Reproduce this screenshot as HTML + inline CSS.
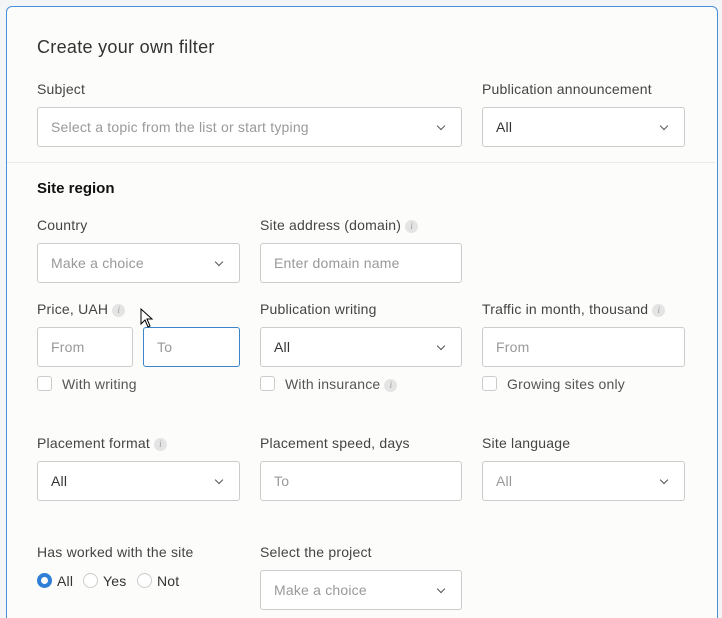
<!DOCTYPE html><html><head><style>
*{box-sizing:border-box;margin:0;padding:0}
html,body{width:722px;height:618px;overflow:hidden}
body{background:#f3f5f7;font-family:"Liberation Sans",sans-serif;position:relative}
.panel{position:absolute;left:6px;top:6px;width:712px;height:640px;background:#fcfcfa;border:1px solid #4a90d9;border-radius:6px}
.a{position:absolute}
.t{font-size:18px;color:#333;letter-spacing:0.3px}
.l{font-size:14px;color:#444;letter-spacing:0.2px}
.in{position:absolute;height:40px;border:1px solid #ccc;border-radius:3px;background:#fff;font-size:14px;color:#999;padding-left:13px;line-height:38px;letter-spacing:0.2px}
.in.v{color:#333}
.ch:after{content:"";position:absolute;right:17px;top:15px;width:5px;height:5px;border-right:1.5px solid #555;border-bottom:1.5px solid #555;transform:rotate(45deg)}
.i{display:inline-block;width:13px;height:13px;border-radius:50%;background:#e4e4e4;color:#999;font-size:9px;font-style:italic;text-align:center;line-height:13px;font-family:"Liberation Serif",serif;vertical-align:1px;margin-left:4px;letter-spacing:0}
.cb{position:absolute;width:15px;height:15px;border:1px solid #ccc;border-radius:3px;background:#fff}
.r{position:absolute;width:15px;height:15px;border:1px solid #ccc;border-radius:50%;background:#fff}
</style></head><body>
<div class="panel"></div>
<div class="a t" style="left:37px;top:37px">Create your own filter</div>
<div class="a l" style="left:37px;top:81px">Subject</div>
<div class="a l" style="left:482px;top:81px">Publication announcement</div>
<div class="in ch" style="left:37px;top:107px;width:425px">Select a topic from the list or start typing</div>
<div class="in ch v" style="left:482px;top:107px;width:203px">All</div>
<div class="a" style="left:7px;top:162px;width:708px;height:1px;background:#eaeaea"></div>
<div class="a" style="left:37px;top:180px;font-size:15px;font-weight:bold;color:#111">Site region</div>
<div class="a l" style="left:37px;top:217px">Country</div>
<div class="a l" style="left:260px;top:217px">Site address (domain)<span class="i">i</span></div>
<div class="in ch" style="left:37px;top:243px;width:203px">Make a choice</div>
<div class="in" style="left:260px;top:243px;width:202px">Enter domain name</div>
<div class="a l" style="left:37px;top:301px">Price, UAH<span class="i">i</span></div>
<div class="a l" style="left:260px;top:301px">Publication writing</div>
<div class="a l" style="left:482px;top:301px">Traffic in month, thousand<span class="i">i</span></div>
<div class="in" style="left:37px;top:327px;width:96px">From</div>
<div class="in" style="left:143px;top:327px;width:97px;border-color:#3a86c8">To</div>
<div class="in ch v" style="left:260px;top:327px;width:202px">All</div>
<div class="in" style="left:482px;top:327px;width:203px">From</div>
<div class="cb" style="left:37px;top:376px"></div><div class="a l" style="left:62px;top:376px;color:#555">With writing</div>
<div class="cb" style="left:260px;top:376px"></div><div class="a l" style="left:285px;top:376px;color:#555">With insurance<span class="i">i</span></div>
<div class="cb" style="left:482px;top:376px"></div><div class="a l" style="left:507px;top:376px;color:#555">Growing sites only</div>
<div class="a l" style="left:37px;top:435px">Placement format<span class="i">i</span></div>
<div class="a l" style="left:260px;top:435px">Placement speed, days</div>
<div class="a l" style="left:482px;top:435px">Site language</div>
<div class="in ch v" style="left:37px;top:461px;width:203px">All</div>
<div class="in" style="left:260px;top:461px;width:202px">To</div>
<div class="in ch" style="left:482px;top:461px;width:203px">All</div>
<div class="a l" style="left:37px;top:544px">Has worked with the site</div>
<div class="a l" style="left:260px;top:544px">Select the project</div>
<div class="r" style="left:37px;top:573px;border:4px solid #2f7fd6"></div><div class="a l" style="left:57px;top:573px;color:#333">All</div>
<div class="r" style="left:83px;top:573px"></div><div class="a l" style="left:103px;top:573px;color:#333">Yes</div>
<div class="r" style="left:137px;top:573px"></div><div class="a l" style="left:157px;top:573px;color:#333">Not</div>
<div class="in ch" style="left:260px;top:570px;width:202px">Make a choice</div>
<svg class="a" style="left:140px;top:308px" width="14" height="22" viewBox="0 0 14 22"><path d="M1 1 L1 16 L5 12 L8 19 L10 18 L7 11 L12 11 Z" fill="#fff" stroke="#000" stroke-width="1"/></svg>
</body></html>
